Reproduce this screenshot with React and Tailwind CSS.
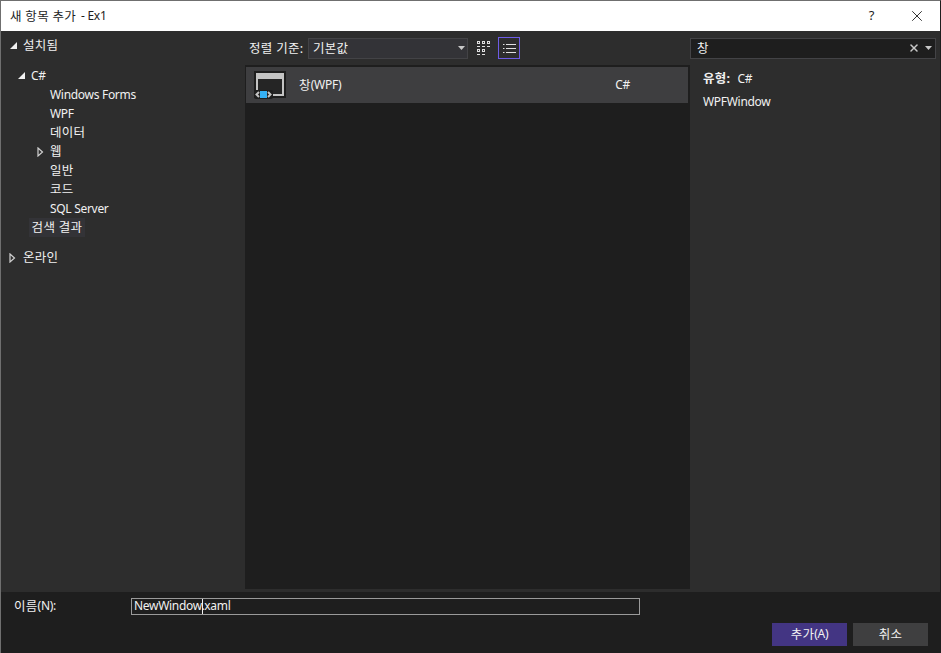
import React from 'react';
import { X } from 'lucide-react';

const font = "font-['Noto_Sans','Noto_Sans_CJK_KR',sans-serif]";

// hangul runs a little wider than the latin text next to it
const Ko = ({ children, className = '' }) => (
  <span className={`inline-block translate-y-[1px] text-[12.5px] tracking-[0.3px] ${className}`}>{children}</span>
);

const Arrow = ({ open }) =>
  open ? (
    <svg width="9" height="9" viewBox="0 0 9 9" className="shrink-0">
      <path d="M8 1V8H1Z" fill="#f1f1f1" />
    </svg>
  ) : (
    <svg width="7" height="10" viewBox="0 0 7 10" className="shrink-0">
      <path d="M1 1L5.5 5L1 9Z" fill="none" stroke="#d0d0d0" strokeWidth="1.2" />
    </svg>
  );

const TreeRow = ({ label, indent, arrow, className = '' }) => (
  <div className={`flex h-[19px] items-center ${indent} ${className}`}>
    {arrow && <span className="flex w-[14px] items-center">{arrow}</span>}
    <span className="leading-none">{label}</span>
  </div>
);

const WindowIcon = () => (
  <svg width="32" height="28" viewBox="0 0 32 28">
    <rect x="0" y="0" width="32" height="27" fill="#1e1e1e" />
    <rect x="2" y="2" width="28" height="23" fill="#c4c4c4" />
    <rect x="4" y="8" width="24" height="15" fill="#252525" />
    <rect x="0" y="19" width="19" height="9" rx="2" fill="#1e1e1e" />
    <path d="M5 21L2.5 23.5L5 26" fill="none" stroke="#c4c4c4" strokeWidth="2" />
    <path d="M14 21L16.5 23.5L14 26" fill="none" stroke="#c4c4c4" strokeWidth="2" />
    <rect x="6" y="20" width="7" height="7" fill="#35b1f5" />
  </svg>
);

const GridIcon = () => (
  <svg width="14" height="14" viewBox="0 0 14 14" fill="none" stroke="#e0e0e0" strokeWidth="1">
    <rect x="0.5" y="0.5" width="2" height="2" />
    <rect x="5.5" y="0.5" width="2" height="2" />
    <rect x="10.5" y="0.5" width="2" height="2" />
    <path d="M0 5.5H3M5 5.5H8M10 5.5H13" />
    <rect x="0.5" y="8.5" width="2" height="2" />
    <rect x="5.5" y="8.5" width="2" height="2" />
    <path d="M0 13.5H3M5 13.5H8" />
  </svg>
);

const ListIcon = () => (
  <svg width="13" height="11" viewBox="0 0 13 11" stroke="#e0e0e0" strokeWidth="1">
    <path d="M0 1.5H1.5M3 1.5H13M0 5.5H1.5M3 5.5H13M0 9.5H1.5M3 9.5H13" />
  </svg>
);

export default function App() {
  return (
    <div className={`relative flex h-[653px] w-[941px] flex-col overflow-hidden border-t border-l border-r border-t-[#6f6f6f] border-l-[#6f6f6f] border-r-[#1e1e1e] bg-[#2d2d2d] text-[12px] tracking-[-0.3px] text-[#f1f1f1] ${font}`}>
      <div className="absolute right-[-1px] top-0 h-[323px] w-px bg-[#6f6f6f]" />

      {/* Title bar */}
      <div className="flex h-[30px] shrink-0 items-center bg-white pl-[9px] text-[#1e1e1e]">
        <Ko>새 항목 추가</Ko>
        <span className="ml-[5px]">- Ex1</span>
        <span className="ml-auto mr-[34px] text-[13px]">?</span>
        <X size={18} strokeWidth={1.2} className="mr-[14px]" />
      </div>

      {/* Body */}
      <div className="flex min-h-0 flex-1">
        {/* Tree */}
        <div className="w-[244px] shrink-0 pt-[5px]">
          <TreeRow label={<Ko>설치됨</Ko>} indent="pl-[8px]" arrow={<Arrow open />} />
          <TreeRow label="C#" indent="pl-[16px] mt-[11px]" arrow={<Arrow open />} />
          <TreeRow label="Windows Forms" indent="pl-[49px]" />
          <TreeRow label="WPF" indent="pl-[49px]" />
          <TreeRow label={<Ko>데이터</Ko>} indent="pl-[49px]" />
          <div className="flex h-[19px] items-center pl-[36px]">
            <span className="w-[13px]"><Arrow /></span><Ko>웹</Ko>
          </div>
          <TreeRow label={<Ko>일반</Ko>} indent="pl-[49px]" />
          <TreeRow label={<Ko>코드</Ko>} indent="pl-[49px]" />
          <TreeRow label="SQL Server" indent="pl-[49px]" />
          <div className="ml-[28px] flex h-[19px] w-[56px] items-center justify-center bg-[#333337]"><Ko>검색 결과</Ko></div>
          <div className="mt-[11px] flex h-[19px] items-center pl-[8px]">
            <span className="w-[14px]"><Arrow /></span><Ko>온라인</Ko>
          </div>
        </div>

        {/* Center */}
        <div className="flex w-[445px] shrink-0 flex-col">
          <div className="flex h-[34px] shrink-0 items-center">
            <span className="ml-[4px] w-[59px]"><Ko>정렬 기준:</Ko></span>
            <div className="flex h-[21px] w-[160px] items-center border border-[#434346] bg-[#333337] pl-[4px]">
              <Ko>기본값</Ko>
              <svg width="7" height="4" viewBox="0 0 7 4" className="ml-auto mr-[2px]"><path d="M0 0H7L3.5 4Z" fill="#c8c8c8" /></svg>
            </div>
            <div className="ml-[9px]"><GridIcon /></div>
            <div className="ml-[7px] flex h-[22px] w-[22px] items-center justify-center border border-[#6e5ce6]"><ListIcon /></div>
          </div>
          <div className="flex-1 bg-[#1e1e1e] pt-[2px]">
            <div className="ml-[1px] mr-[2px] flex h-[36px] items-center bg-[#3e3e40] pl-[8px]">
              <WindowIcon />
              <span className="ml-[13px]"><Ko>창</Ko>(WPF)</span>
              <span className="ml-auto mr-[58px]">C#</span>
            </div>
          </div>
        </div>

        {/* Search and details */}
        <div className="min-w-0 flex-1">
          <div className="flex h-[34px] items-center">
            <div className="flex h-[21px] w-[246px] items-center border border-[#434346] bg-[#1e1e1e] pl-[6px]">
              <Ko>창</Ko>
              <X size={12} strokeWidth={3} className="ml-auto text-[#c8c8c8]" />
              <svg width="7" height="4" viewBox="0 0 7 4" className="ml-[5px] mr-[3px]"><path d="M0 0H7L3.5 4Z" fill="#c8c8c8" /></svg>
            </div>
          </div>
          <div className="pl-[13px] pt-[4px]">
            <div className="flex h-[19px] items-center"><Ko className="font-bold">유형:</Ko><span className="ml-[7px]">C#</span></div>
            <div className="mt-[4px] flex h-[19px] items-center">WPFWindow</div>
          </div>
        </div>
      </div>

      {/* Footer */}
      <div className="mt-[3px] h-[61px] shrink-0 bg-[#1e1e1e]">
        <div className="flex h-[31px] items-center pb-[6px] pt-[4px]">
          <span className="ml-[13px] w-[117px]"><Ko>이름</Ko>(N):</span>
          <div className="relative flex h-[17px] w-[509px] items-center border border-[#9a9a9a] pb-[2px] pl-[2px]">
            NewWindow.xaml
            <span className="absolute left-[70px] top-0 h-[15px] w-px bg-[#f1f1f1]" />
          </div>
        </div>
        <div className="flex justify-end gap-[6px] pr-[12px]">
          <button className="h-[23px] w-[75px] bg-[#433583] text-[#f1f1f1]"><Ko>추가</Ko>(A)</button>
          <button className="h-[23px] w-[75px] bg-[#3f3f40] text-[#f1f1f1]"><Ko>취소</Ko></button>
        </div>
      </div>
    </div>
  );
}
